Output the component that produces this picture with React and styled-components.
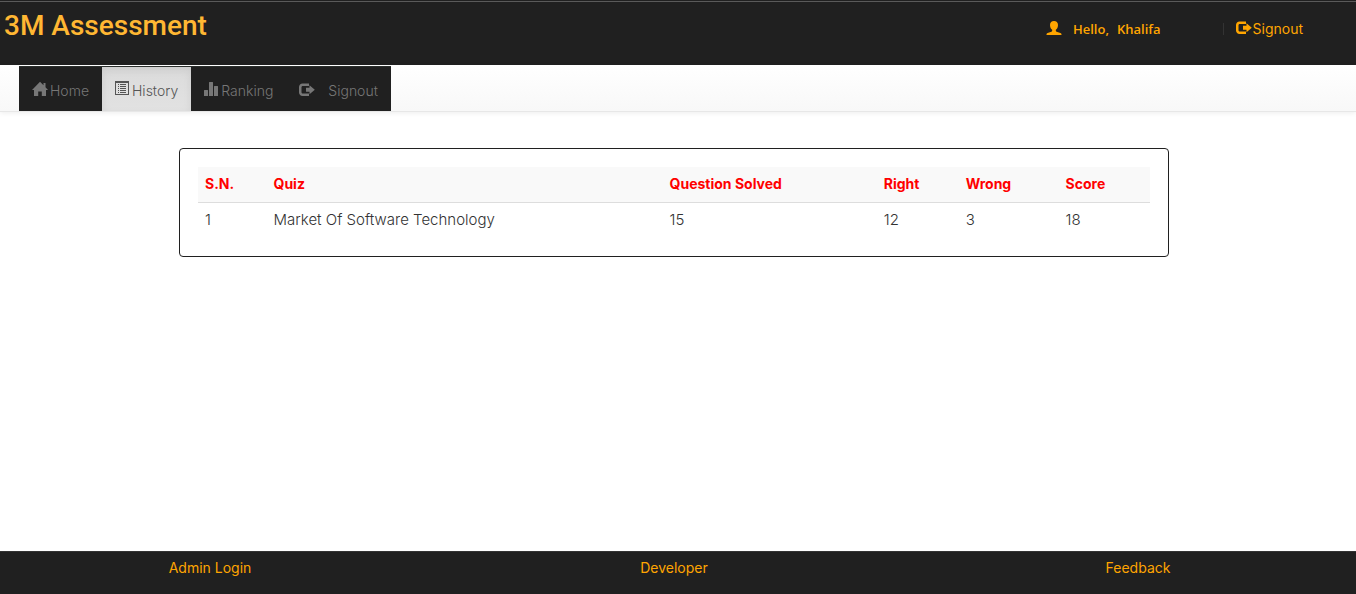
import React from "react";
import styled, { createGlobalStyle } from "styled-components";

const ink = "#202020";
const sans = 'Inter, "Liberation Sans", sans-serif';

const GlobalStyle = createGlobalStyle`
  *, *::before, *::after { box-sizing: border-box; }
  body {
    margin: 0;
    background: #fff;
    color: #333;
    font-family: ${sans};
    font-size: 14px;
    line-height: 20px;
  }
  a { text-decoration: none; }
`;

const Page = styled.div`
  display: flex;
  flex-direction: column;
  min-height: 100vh;
`;

const Header = styled.header`
  display: flex;
  justify-content: space-between;
  align-items: flex-start;
  height: 65px;
  padding: 0 53px 0 4px;
  background: ${ink};
  border-top: 1px solid ${ink};
  box-shadow: inset 0 1px 0 #5a5a5a;
`;

const Brand = styled.h1`
  margin: 0;
  padding-top: 5px;
  color: #ffb733;
  font-family: Roboto, sans-serif;
  font-size: 28px;
  font-weight: 500;
  line-height: 40px;
`;

const Account = styled.div`
  display: flex;
  align-items: center;
  padding-top: 18px;
  color: #ffa500;
`;

const Greeting = styled.span`
  display: flex;
  gap: 8px;
  margin-left: 11px;
  font-family: "Open Sans", sans-serif;
  font-size: 13px;
  font-weight: 600;
`;

const Divider = styled.span`
  width: 1px;
  height: 12px;
  margin: 0 12px 0 62px;
  background: #333;
`;

const HeaderLink = styled.a`
  display: flex;
  align-items: center;
  gap: 1px;
  color: #ffa500;
`;

const NavBar = styled.nav`
  height: 47px;
  padding: 1px 19px 0;
  background: linear-gradient(#fff, #f8f8f8);
  border-bottom: 1px solid #e7e7e7;
  box-shadow: 0 1px 5px rgba(0, 0, 0, 0.075);
`;

const NavList = styled.ul`
  display: flex;
  width: max-content;
  margin: 0;
  padding: 0;
  list-style: none;
  background: ${ink};
  border-top: 1px solid #2b2f2d;
`;

const NavLink = styled.a`
  display: flex;
  align-items: center;
  gap: ${(p) => (p.$spaced ? "13px" : "2px")};
  height: 44px;
  padding: 3px 13px 0;
  color: ${(p) => (p.$active ? "#555" : "#777")};
  background: ${(p) => (p.$active ? "linear-gradient(#dbdbdb, #e2e2e2)" : "transparent")};
  box-shadow: ${(p) => (p.$active ? "inset 0 3px 9px rgba(0, 0, 0, 0.075)" : "none")};
  font-weight: 300;
`;

const Main = styled.main`
  flex: 1;
  padding: 36px 8px 36px 0;
`;

const Panel = styled.section`
  max-width: 990px;
  margin: 0 auto;
  padding: 18px;
  border: 1px solid ${ink};
  border-radius: 4px;
`;

const Results = styled.table`
  width: 100%;
  table-layout: fixed;
  border-collapse: collapse;
  text-align: left;
`;

const Column = styled.col`
  width: ${(p) => p.$share}%;
`;

const HeadCell = styled.th`
  height: 35px;
  padding: 0 7px;
  color: #f00;
  background: #f9f9f9;
  border-bottom: 1px solid #ddd;
  font-weight: 700;
`;

const Cell = styled.td`
  height: 36px;
  padding: 0 7px;
  font-size: 15px;
  font-weight: 300;
`;

const Footer = styled.footer`
  display: grid;
  grid-template-columns: 420fr 508fr 420fr;
  justify-items: center;
  align-items: start;
  height: 43px;
  padding: 6px 8px 0 0;
  background: ${ink};
  border-top: 1px solid #333;
`;

const FooterLink = styled.a`
  color: #ffa500;
`;

const Glyph = styled.svg`
  display: block;
  flex: none;
  fill: currentColor;
  margin-bottom: ${(p) => p.$lift || 0}px;
`;

const UserIcon = () => (
  <Glyph width="16" height="16" viewBox="0 0 16 16" aria-hidden="true" $lift={2}>
    <path d="M8 1C5.600 1 4 2.600 4 5c0 2.200.9 3.900 2.200 4.800v.8c0 .5-.3.9-.8 1.100L1.600 13c-.7.3-1.100.8-1.100 1.500v.5h15v-.5c0-.7-.4-1.200-1.100-1.500l-3.800-1.300c-.5-.2-.8-.6-.8-1.100v-.8C11.100 8.900 12 7.200 12 5c0-2.400-1.600-4-4-4z" />
  </Glyph>
);

const SignoutIcon = () => (
  <Glyph width="16" height="14" viewBox="0 0 16 14" aria-hidden="true" $lift={2}>
    <path d="M10 .5H3.500C1.600.5 0 2.100 0 4v5.500C0 11.400 1.600 13 3.500 13H10V10.500H4c-.8 0-1.500-.5-1.500-1.300V4.300C2.500 3.500 3.200 3 4 3h6z" />
    <path d="M10.500 2.300 15.800 6.800l-5.300 4.500V8.800H7V4.800h3.500z" />
  </Glyph>
);

const HomeIcon = () => (
  <Glyph width="16" height="16" viewBox="0 0 16 16" aria-hidden="true" $lift={3}>
    <path d="M8 .8 11.500 4.300V2h2v4.300L16 9H14v6H9.800v-4.500H6.200V15H2V9H0z" />
  </Glyph>
);

const ListIcon = () => (
  <Glyph width="15" height="15" viewBox="0 0 15 15" aria-hidden="true" $lift={4}>
    <path fillRule="evenodd" d="M0 0h14v14H0zM1 2v11h12V2z" />
    <path d="M3 3h1v1H3zM5 3h6v1H5zM3 5h1v1H3zM5 5h6v1H5zM3 7h1v1H3zM5 7h6v1H5zM3 9h1v1H3zM5 9h6v1H5zM3 11h1v1H3zM5 11h6v1H5z" />
  </Glyph>
);

const BarsIcon = () => (
  <Glyph width="15" height="14" viewBox="0 0 15 14" aria-hidden="true" $lift={3}>
    <path d="M.5 8h3q.5 0 .5.500V14H0V8.500Q0 8 .5 8zM5.500 0h3q.5 0 .5.500V14H5V.5Q5 0 5.500 0zM10.500 4h3q.5 0 .5.500V14h-4V4.500q0-.5.5-.5z" />
  </Glyph>
);

const navItems = [
  { label: "Home", Icon: HomeIcon },
  { label: "History", Icon: ListIcon, active: true },
  { label: "Ranking", Icon: BarsIcon },
  { label: "Signout", Icon: SignoutIcon, spaced: true },
];

const columns = [
  { title: "S.N.", share: 7.2 },
  { title: "Quiz", share: 41.6 },
  { title: "Question Solved", share: 22.5 },
  { title: "Right", share: 8.6 },
  { title: "Wrong", share: 10.5 },
  { title: "Score", share: 9.6 },
];

const rows = [["1", "Market Of Software Technology", "15", "12", "3", "18"]];

export default function App() {
  return (
    <Page>
      <GlobalStyle />
      <Header>
        <Brand>3M Assessment</Brand>
        <Account>
          <UserIcon />
          <Greeting>
            <span>Hello,</span>
            <span>Khalifa</span>
          </Greeting>
          <Divider />
          <HeaderLink href="#signout">
            <SignoutIcon />
            Signout
          </HeaderLink>
        </Account>
      </Header>
      <NavBar>
        <NavList>
          {navItems.map(({ label, Icon, active, spaced }) => (
            <li key={label}>
              <NavLink
                href={"#" + label.toLowerCase()}
                $active={active}
                $spaced={spaced}
                aria-current={active ? "page" : undefined}
              >
                <Icon />
                {label}
              </NavLink>
            </li>
          ))}
        </NavList>
      </NavBar>
      <Main>
        <Panel>
          <Results>
            <colgroup>
              {columns.map((c) => (
                <Column key={c.title} $share={c.share} />
              ))}
            </colgroup>
            <thead>
              <tr>
                {columns.map((c) => (
                  <HeadCell key={c.title} scope="col">
                    {c.title}
                  </HeadCell>
                ))}
              </tr>
            </thead>
            <tbody>
              {rows.map((row) => (
                <tr key={row[0]}>
                  {row.map((value, i) => (
                    <Cell key={columns[i].title}>{value}</Cell>
                  ))}
                </tr>
              ))}
            </tbody>
          </Results>
        </Panel>
      </Main>
      <Footer>
        <FooterLink href="#admin">Admin Login</FooterLink>
        <FooterLink href="#developer">Developer</FooterLink>
        <FooterLink href="#feedback">Feedback</FooterLink>
      </Footer>
    </Page>
  );
}
